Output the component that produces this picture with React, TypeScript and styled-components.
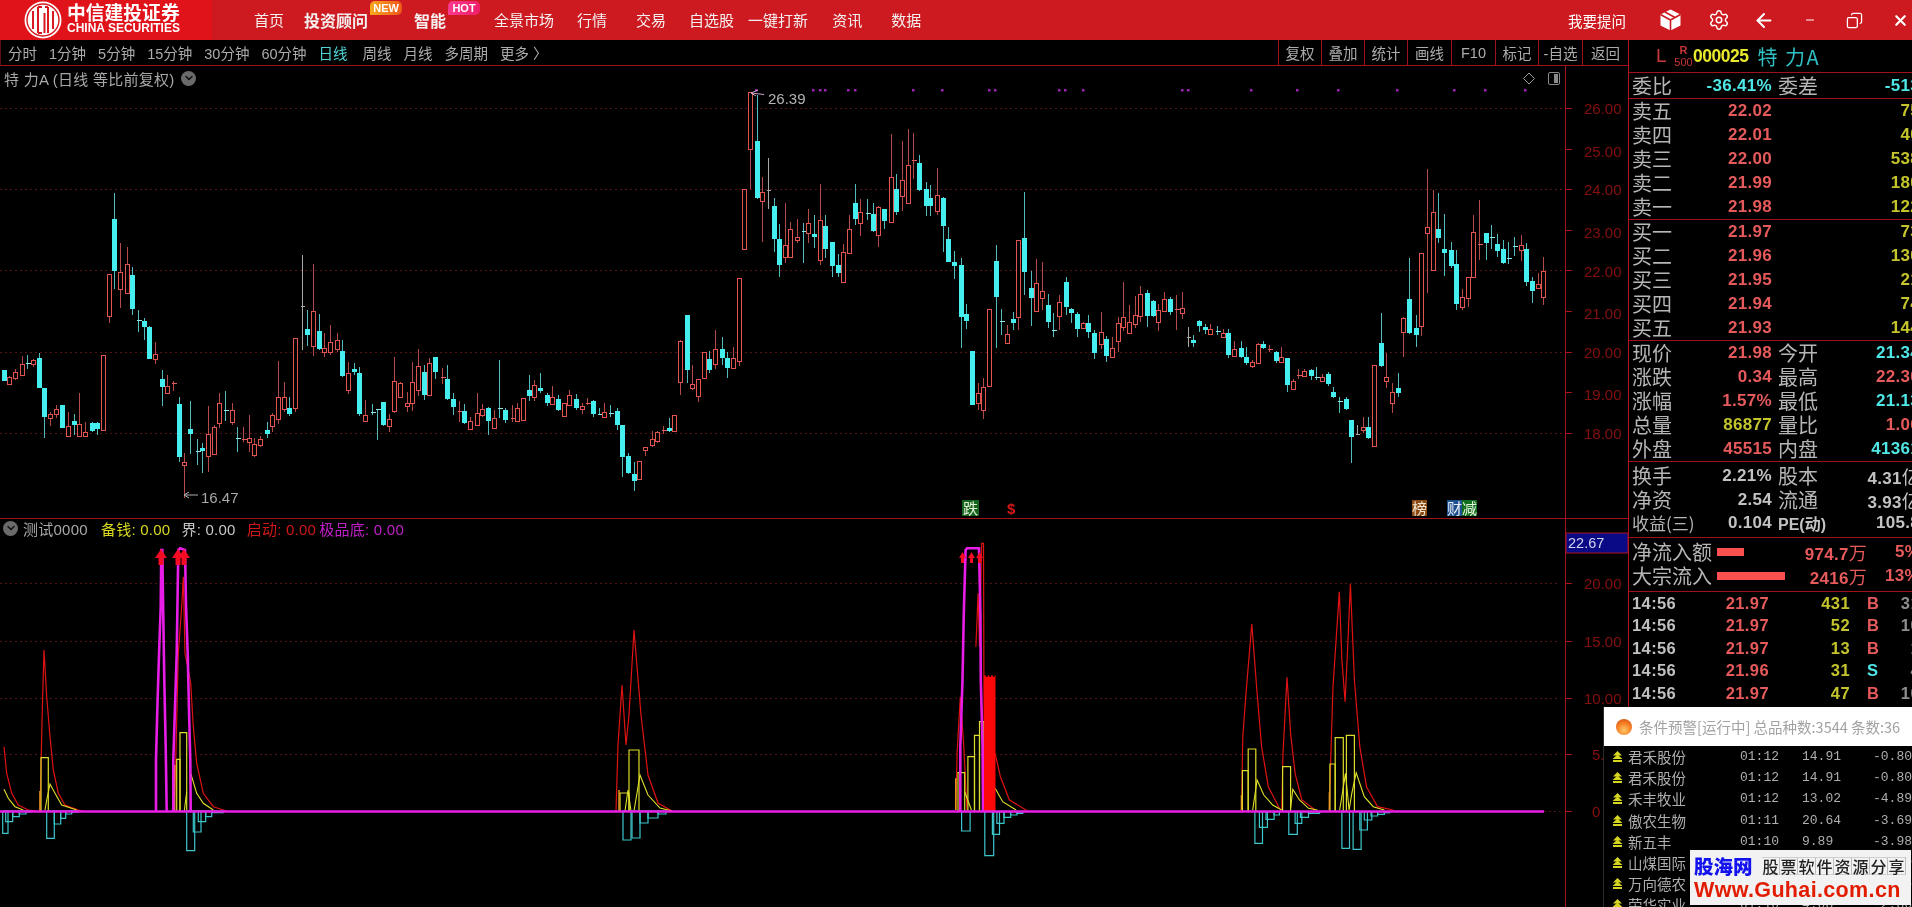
import React from "react";
import styled, { createGlobalStyle } from "styled-components";
import { Settings, ArrowLeft, Copy, X, Minus, ChevronDown } from "lucide-react";

const SANS = `"Liberation Sans", "Noto Sans CJK SC", sans-serif`;
const GlobalStyle = createGlobalStyle`
  html, body { margin: 0; padding: 0; background: #000; overflow: hidden; font-family: ${SANS}; }
`;

const RED_LINE = "#9e1218";
const C = { label: "#b6b6b6", red: "#e65a5c", cyan: "#4fe6e6", yellow: "#c4c42c", gray: "#c2c2c2" };

/* ---------- candle data: zoomed coordinates of each crop ---------- */
const SEG_A = `c12,600,600,633,633 r27,617,622,643,643 r45,597,607,623,630 r65,557,582,615,617 c80,555,578,580,598 r98,567,569,582,590 c117,548,563,653,655 c132,653,653,742,805 r151,727,733,745,767 r169,706,716,733,745 c185,706,706,775,775 r204,725,767,797,797 c222,733,753,765,795 r237,668,763,797,797 r256,755,785,799,802 c275,757,758,783,785 c290,757,758,777,795 r308,556,556,780,780 r327,313,313,437,460 c342,68,147,303,356 r361,218,307,358,415 r380,230,283,370,372 c395,292,316,416,434 c413,420,451,456,487 c432,444,454,472,510 c447,468,470,566,568 r466,515,552,567,582 c485,600,628,651,708 r500,615,647,670,672 r519,633,638,645,663 c538,680,702,862,875 r552,848,875,884,985 c571,693,777,791,852 c590,806,844,848,885 c605,818,833,843,910 r624,709,792,857,907 r642,765,772,851,855 r657,670,698,758,775 c676,664,720,722,753 r695,698,720,757,765 c710,772,803,805,845 r729,770,807,812,815 r747,735,803,816,845 r762,803,822,856,862 r781,798,806,825,830 c800,757,781,792,803 r815,730,734,767,785 r834,573,680,748,762 r852,635,680,717,727 c867,680,713,732,738 r885,503,503,713,727 g905,255,409,411,540 c920,420,477,495,528 r939,283,424,527,558 c958,432,484,538,540 r972,490,533,547,562 r991,465,515,547,555 r1010,488,511,537,545 c1025,510,544,618,622 r1044,575,608,660,672 c1062,578,597,606,615 c1077,590,608,733,738 r1096,690,736,752,755 c1115,702,725,728,736 c1130,716,716,718,810 c1149,695,697,765,767 r1167,732,748,767,787 r1183,562,634,724,728`;
const SEG_B = `r0,905,910,950,950 r20,935,968,977,997 r36,845,905,970,993 r54,806,858,930,947 c72,855,875,945,960 r87,833,848,945,945 c106,830,832,877,897 r125,865,890,892,912 c140,855,897,957,960 c158,938,957,982,1005 r177,962,992,1000,1025 c193,972,992,1030,1032 r211,1010,1024,1048,1050 r230,940,998,1034,1036 r245,972,988,1005,1010 c264,982,984,1024,1065 r282,990,1013,1045,1047 c297,840,985,988,1015 c316,985,990,1020,1030 r335,975,1013,1020,1025 r350,968,983,1022,1024 r369,955,955,1020,1020 c388,885,930,948,963 r403,900,915,952,963 c421,880,923,934,940 c440,940,945,968,978 r456,918,950,972,974 c474,945,958,990,992 r492,968,968,1008,1010 r508,930,945,975,975 c527,943,958,985,990 r545,968,977,987,1002 r560,955,968,974,974 c579,960,962,1002,1012 c597,985,1003,1005,1005 r612,968,997,1012,1014 c631,975,999,1003,1010 c650,985,994,1035,1050 c665,1036,1036,1130,1192 c684,1120,1128,1180,1182 c702,1145,1183,1203,1233 r717,1142,1144,1197,1200 r736,1100,1102,1110,1128 r755,1052,1078,1095,1102 r770,1052,1055,1083,1090 r789,1038,1050,1054,1062 c807,1015,1044,1054,1056 r822,1006,1006,1052,1054 r841,780,782,906,945 c860,705,706,870,910 r875,855,912,924,930 r894,898,898,947,967 r912,815,816,895,897 c927,812,838,870,880 r946,750,808,852,866 c965,772,808,833,855 c980,817,833,863,895 r999,802,833,865,867 r1017,594,594,842,858 r1032,328,328,508,510 r1051,35,35,208,328 c1070,45,183,355,357 r1085,290,335,363,487 g1103,233,330,332,388 c1122,353,377,478,517 c1137,432,478,555,590 r1156,368,495,532,548 r1171,425,447,530,533 r1190,418,470,480,490 c1209,428,452,460,548 r1224,388,430,460,490 c1242,405,463,472,503 r1261,312,420,540,554 c1276,405,438,508,535 c1295,485,485,558,592 c1314,522,556,580,590 r1329,492,515,605,607 r1347,405,447,520,522`;
const SEG_C = `c15,312,368,418,435 r31,357,397,430,467 c50,357,398,400,420 c69,368,402,452,456 r84,378,382,464,502 c103,388,388,423,446 r122,162,290,427,427 c137,283,327,395,405 r155,182,301,347,393 r174,147,256,370,372 r189,158,241,245,296 c208,225,248,330,332 c227,305,327,378,407 c241,316,353,378,407 r260,264,346,392,404 c279,352,353,437,517 c294,440,477,545,547 c313,512,545,558,596 c332,533,555,710,803 c347,672,702,722,746 c366,814,814,975,975 r384,908,938,968,990 r399,893,920,990,1016 r418,687,687,918,918 c437,495,544,652,805 c452,687,724,727,765 r471,735,762,788,788 c489,695,716,730,750 r504,481,481,711,750 c523,335,473,576,645 c542,574,624,655,738 r557,536,608,692,692 r576,547,634,655,690 c594,642,676,727,745 c609,698,750,753,772 r628,645,665,708,750 c647,592,606,680,705 c662,684,687,700,730 c681,695,701,746,772 r699,725,730,745,747 c714,705,729,757,775 c733,750,758,818,838 r752,697,756,792,808 c767,768,777,828,847 r786,770,803,832,834 r804,710,728,783,815 r819,606,710,742,752 r838,675,725,758,762 r856,648,706,733,745 r871,618,643,708,727 c890,630,640,708,742 c909,660,662,708,712 r924,672,690,726,752 r943,637,658,692,694 c961,650,656,695,705 r977,645,687,690,750 r995,637,684,699,718 g1014,740,770,772,800 c1029,765,781,788,802 c1048,720,722,737,757 c1066,732,740,750,762 r1081,733,748,762,766 c1100,737,753,760,765 r1119,748,759,772,775 c1134,748,758,825,835 r1153,782,808,827,830 c1172,782,803,832,835 c1187,800,830,850,855 r1205,840,845,857,865 r1224,790,792,850,852 c1239,782,792,803,806 r1258,795,806,812,815 c1277,812,815,842,850 r1292,802,830,846,848 c1311,833,833,915,935 r1329,897,904,928,930 r1344,868,884,890,897`;
const SEG_D = `r193,868,874,888,888 c212,868,869,888,900 c227,862,892,895,900 r246,882,890,902,903 c264,875,882,912,918 c279,920,936,950,955 c298,950,964,966,998 c317,950,958,988,990 c332,1020,1021,1072,1150 g351,1035,1062,1064,1066 r369,1012,1040,1050,1060 c384,1012,1040,1075,1078 r403,856,856,1098,1098 c422,698,788,858,860 r437,818,890,903,925 r456,908,935,968,998 c475,878,924,940,950 r489,712,714,757,832 c508,533,658,760,762 c527,705,744,765,800 r542,518,518,738,768 r561,267,440,460,640 r579,330,395,570,572 c594,338,448,475,488 c613,403,507,520,588 c632,485,510,558,565 c647,510,552,672,690 r666,628,650,682,690 r684,590,590,655,682 r699,405,455,592,592 r718,360,492,496,540 c737,458,459,490,540 c752,435,472,474,508 c771,462,492,513,532 c790,480,508,550,552 c804,485,535,537,552 c823,472,499,501,528 r842,465,496,510,542 c857,488,507,605,618 c876,592,604,632,668 r894,578,613,625,627 r909,530,572,652,675`;

type Candle = { k: string; x: number; hi: number; top: number; bot: number; lo: number };
const parseSeg = (s: string, ox: number, oy: number): Candle[] =>
  s.split(/\s+/).filter(Boolean).map((t) => {
    const [x, hi, top, bot, lo] = t.slice(1).split(",").map(Number);
    const y = (v: number) => Math.round(oy + v / 3);
    return { k: t[0], x: Math.round(ox + x / 3), hi: y(hi), top: y(top), bot: y(bot), lo: y(lo) };
  });
const CANDLES: Candle[] = [
  ...parseSeg(SEG_A, 0, 170),
  ...parseSeg(SEG_B, 400, 80),
  ...parseSeg(SEG_C, 850, 80),
  ...parseSeg(SEG_D, 1240, 80),
];

const CandleMark = ({ c }: { c: Candle }) => {
  const cx = c.x + 0.5;
  const thin = c.bot - c.top < 3;
  if (c.k === "g")
    return (
      <g stroke="#a8a8a8">
        <line x1={cx} x2={cx} y1={c.hi} y2={c.lo} />
        <line x1={cx - 2} x2={cx + 2} y1={c.top} y2={c.top} />
      </g>
    );
  if (c.k === "c")
    return (
      <g>
        <line x1={cx} x2={cx} y1={c.hi} y2={c.lo} stroke="#52bcbc" />
        {thin ? (
          <line x1={cx - 2} x2={cx + 3} y1={c.top + 0.5} y2={c.top + 0.5} stroke="#8eeaea" />
        ) : (
          <rect x={c.x - 2} y={c.top} width={5} height={c.bot - c.top} fill="#46efef" />
        )}
      </g>
    );
  return (
    <g>
      <line x1={cx} x2={cx} y1={c.hi} y2={c.lo} stroke="#b44a4a" />
      {thin ? (
        <line x1={cx - 2} x2={cx + 3} y1={c.top + 0.5} y2={c.top + 0.5} stroke="#e45c5c" />
      ) : (
        <rect x={c.x - 1.5} y={c.top + 0.5} width={4} height={c.bot - c.top} fill="#000" stroke="#e2544f" />
      )}
    </g>
  );
};

/* ---------- indicator data ---------- */
type Bar = [number, number, number];
type Group = {
  sx: number; ox: number; oy: number; sy: number; base: number;
  red: string[]; yellow: string[]; orange: string[]; magenta: string[];
  cyanBars: Bar[]; yellowBars: Bar[];
};
const INDICATOR: Group[] = [
  {
    sx: 1 / 3, ox: 0, oy: 510, sy: 1 / 3, base: 903,
    red: [
      "12,710 20,790 35,850 55,885 85,900 110,903",
      "120,903 124,730 127,600 132,420 140,560 150,680 160,780 175,850 195,885 235,900 250,903",
      "522,903 527,760 535,430 545,290 550,200 555,430 565,480 572,520 580,650 590,760 610,850 640,890 680,903",
    ],
    yellow: [
      "12,838 25,865 45,890 70,900",
      "135,900 140,870 150,822 165,850 185,885 230,900",
      "553,903 560,845",
      "572,790 590,850 610,880 640,900",
    ],
    orange: ["120,903 120,843", "524,903 524,765"],
    magenta: [
      "468,903 468,750 472,600 477,435 482,290 484,120 487,120 490,320 493,510 497,710 500,903",
      "520,903 520,750 525,590 530,430 535,120 540,115 555,120 558,285 563,430 567,600 571,750 572,903",
    ],
    cyanBars: [
      [8, 24, 970], [17, 38, 935], [38, 58, 920], [58, 78, 912], [78, 92, 906],
      [140, 163, 985], [163, 182, 942], [182, 197, 925], [197, 215, 912], [215, 235, 906],
      [560, 584, 1022], [580, 603, 966], [595, 617, 935], [617, 635, 920], [635, 670, 908],
    ],
    yellowBars: [[123, 145, 743], [530, 540, 748], [540, 560, 668]],
  },
  {
    sx: 1, ox: 0, oy: 0, sy: 1, base: 811,
    red: ["616,811 618,745 622,685 626,745 629,715 634,630 641,715 648,775 658,803 672,811"],
    yellow: ["634,811 640,775 648,795 660,808 672,811", "625,811 628,790 631,811"],
    orange: ["619,811 619,790"],
    magenta: [],
    cyanBars: [[623, 631, 840], [632, 640, 838], [640, 648, 823], [648, 658, 818], [658, 666, 814]],
    yellowBars: [[620, 629, 793], [629, 639, 750]],
  },
  {
    sx: 0.4464, ox: 900, oy: 480, sy: 1 / 3, base: 995,
    red: [
      "125,990 128,820 135,650 143,800 150,990",
      "170,500 175,340 178,500 183,190 187,190 188,600 190,995",
      "213,820 225,890 245,960 285,992",
      "765,990 768,770 775,640 788,432 800,640 810,800 825,920 850,985",
      "855,990 858,820 867,592 875,760 885,880 900,960 930,990",
      "962,990 965,830 970,620 984,335 990,540 997,665 1003,500 1009,312 1018,600 1030,800 1045,920 1070,980 1105,990",
    ],
    yellow: [
      "145,935 160,990",
      "213,925 230,965 260,990",
      "790,990 800,900 815,945 835,975 855,990",
      "875,985 880,928 895,960 915,985 935,990",
      "985,990 998,880 1006,990 1012,940 1022,878 1040,950 1060,980 1085,990",
    ],
    orange: ["125,990 125,895", "765,990 765,945", "962,990 962,937"],
    magenta: ["135,995 135,800 140,600 143,400 147,210 150,205 177,205 180,400 181,600 185,800 186,995"],
    cyanBars: [
      [138, 157, 1053], [190, 210, 1127], [207, 223, 1063], [217, 233, 1030], [233, 248, 1012], [248, 262, 1005], [262, 275, 1000],
      [795, 812, 1090], [805, 823, 1042], [820, 838, 1018], [838, 850, 1005],
      [871, 890, 1063], [885, 900, 1030], [897, 915, 1012], [915, 940, 1000],
      [990, 1007, 1105], [1015, 1033, 1108], [1030, 1047, 1050], [1040, 1057, 1020], [1055, 1070, 1008], [1070, 1085, 1003], [1085, 1097, 998],
    ],
    yellowBars: [
      [130, 145, 878], [152, 167, 830], [167, 178, 766], [178, 188, 725],
      [767, 780, 872], [780, 797, 807], [857, 875, 860], [963, 975, 852], [975, 993, 773], [1000, 1018, 766],
    ],
  },
];

const ptsOf = (g: Group, s: string) =>
  s.split(" ").map((p) => {
    const [x, y] = p.split(",").map(Number);
    return `${(g.ox + x * g.sx).toFixed(1)},${(g.oy + y * g.sy).toFixed(1)}`;
  }).join(" ");
const gx = (g: Group, v: number) => g.ox + v * g.sx;
const gy = (g: Group, v: number) => g.oy + v * g.sy;
const barPath = (g: Group, b: Bar) => {
  const [x1, x2, y] = b;
  const base = gy(g, g.base);
  return `M${gx(g, x1).toFixed(1)} ${base}V${gy(g, y).toFixed(1)}H${gx(g, x2).toFixed(1)}V${base}`;
};

/* ---------- layout ---------- */
const Page = styled.div`
  position: relative;
  width: 1912px;
  height: 907px;
  overflow: hidden;
  background: #000;
  display: flex;
  flex-direction: column;
  filter: blur(0.3px);
`;
const TopBar = styled.header`
  height: 40px;
  flex: none;
  display: flex;
  align-items: center;
  background: #cc1a20;
  color: #f4f0f0;
`;
const LogoBlock = styled.div`
  width: 212px;
  height: 40px;
  flex: none;
  display: flex;
  align-items: center;
  padding-left: 24px;
  box-sizing: border-box;
  gap: 5px;
  background: #e0121a;
  color: #fff;
`;
const LogoText = styled.div`
  display: flex;
  flex-direction: column;
  line-height: 1;
  margin-top: -3px;
`;
const LogoCn = styled.span`
  font: 700 18.8px "Noto Sans CJK SC", sans-serif;
  line-height: 20px;
  white-space: nowrap;
`;
const LogoEn = styled.span`
  font: 700 12px "Liberation Sans", sans-serif;
  line-height: 13px;
  white-space: nowrap;
`;
const Nav = styled.nav`
  display: flex;
  align-items: center;
  padding-left: 42px;
`;
const NavItem = styled.span<{ $ml?: number; $bold?: boolean }>`
  position: relative;
  margin-left: ${(p) => p.$ml ?? 0}px;
  font-size: ${(p) => (p.$bold ? 16 : 15)}px;
  font-weight: ${(p) => (p.$bold ? 700 : 400)};
  font-family: "Noto Sans CJK SC", sans-serif;
  line-height: 22px;
  white-space: nowrap;
`;
const Badge = styled.span<{ $bg: string }>`
  position: absolute;
  left: calc(100% + 2px);
  top: -8px;
  width: 32px;
  height: 14px;
  border-radius: 5px 5px 5px 0;
  background: ${(p) => p.$bg};
  color: #fff;
  font: 700 11px/14px "Liberation Sans", sans-serif;
  text-align: center;
`;
const TopRight = styled.div`
  margin-left: auto;
  display: flex;
  align-items: center;
  color: #fff;
  height: 40px;
`;
const Ask = styled.span`
  font: 400 14.5px "Noto Sans CJK SC", sans-serif;
  margin-right: 29px;
  white-space: nowrap;
`;
const WinIcon = styled.span<{ $w: number; $pl?: number }>`
  width: ${(p) => p.$w}px;
  padding-left: ${(p) => p.$pl ?? 0}px;
  box-sizing: border-box;
  display: flex;
  justify-content: center;
  align-items: center;
`;
const Body = styled.div`
  flex: 1;
  display: flex;
  min-height: 0;
`;
const MainCol = styled.main`
  width: 1628px;
  flex: none;
  display: flex;
  flex-direction: column;
`;
const Toolbar = styled.div`
  height: 25px;
  flex: none;
  display: flex;
  align-items: center;
  padding-left: 7px;
  gap: 12px;
  border-bottom: 1px solid ${RED_LINE};
  border-left: 1px solid #5a1014;
  box-sizing: content-box;
  font-size: 14.5px;
  color: #acacac;
`;
const Period = styled.span<{ $active?: boolean; $ml?: number }>`
  color: ${(p) => (p.$active ? "#4fd4d8" : "#acacac")};
  margin-left: ${(p) => p.$ml ?? 0}px;
  white-space: nowrap;
`;
const ToolButtons = styled.div`
  margin-left: auto;
  display: flex;
  height: 100%;
`;
const ToolButton = styled.span<{ $w?: number }>`
  width: ${(p) => p.$w ?? 43}px;
  box-sizing: border-box;
  border-left: 1px solid ${RED_LINE};
  display: flex;
  align-items: center;
  justify-content: center;
  white-space: nowrap;
  color: #acacac;
`;
const Pane = styled.section<{ $h: number; $line?: boolean }>`
  position: relative;
  height: ${(p) => p.$h}px;
  flex: none;
  ${(p) => (p.$line ? `border-bottom: 1px solid ${RED_LINE};` : "")}
`;
const Chart = styled.svg`
  display: block;
  width: 1628px;
  height: 100%;
  text {
    font-family: ${SANS};
  }
`;
const PaneHeader = styled.div<{ $left?: number; $top?: number }>`
  position: absolute;
  left: ${(p) => p.$left ?? 4}px;
  top: ${(p) => p.$top ?? 2}px;
  display: flex;
  align-items: center;
  height: 20px;
  font-size: 15px;
  letter-spacing: 0.25px;
  color: #a8a8a8;
  white-space: nowrap;
`;
const Legend = styled.span<{ $c: string; $ml?: number }>`
  color: ${(p) => p.$c};
  margin-left: ${(p) => p.$ml ?? 0}px;
`;
const RoundDrop = styled.span<{ $ml?: number; $mr?: number }>`
  width: 15px;
  height: 15px;
  border-radius: 50%;
  background: #6a6a6a;
  color: #111;
  margin-left: ${(p) => p.$ml ?? 0}px;
  margin-right: ${(p) => p.$mr ?? 0}px;
  display: inline-flex;
  align-items: center;
  justify-content: center;
  flex: none;
`;

/* right panel */
const Panel = styled.aside`
  flex: 1;
  min-width: 0;
  overflow: hidden;
  border-left: 1px solid #b0141c;
  box-sizing: border-box;
`;
const QuoteHead = styled.div`
  height: 32px;
  display: flex;
  align-items: center;
  padding-left: 27px;
  white-space: nowrap;
`;
const HeadL = styled.span`
  font-size: 19px;
  color: #c8383a;
  width: 18px;
`;
const HeadRStack = styled.span`
  display: inline-flex;
  flex-direction: column;
  align-items: center;
  width: 19px;
  font-size: 11px;
  line-height: 12px;
  color: #c83434;
`;
const HeadCode = styled.span`
  font: 700 17.5px "Liberation Sans", sans-serif;
  color: #e8e82c;
  margin-left: 0;
  letter-spacing: -0.5px;
`;
const HeadName = styled.span`
  font: 400 20px "Noto Sans CJK SC", sans-serif;
  color: #2fc0c4;
  margin-left: 9px;
  letter-spacing: 1.5px;
`;
const QuoteGroup = styled.div<{ $pt?: number; $pb?: number }>`
  border-top: 1px solid ${RED_LINE};
  padding-top: ${(p) => p.$pt ?? 0}px;
  padding-bottom: ${(p) => p.$pb ?? 0}px;
  width: 291px;
  box-sizing: border-box;
  padding-left: 3px;
`;
const QuoteRow = styled.div<{ $h?: number }>`
  display: grid;
  grid-template-columns: 44px 96px 50px 98px;
  height: ${(p) => p.$h ?? 24}px;
  align-items: center;
`;
const QLabel = styled.span`
  font: 400 20px "Noto Sans CJK SC", sans-serif;
  line-height: 24px;
  color: ${C.label};
  white-space: nowrap;
`;
const QLabel2 = styled(QLabel)`
  padding-left: 6px;
`;
const QLabelSmall = styled(QLabel)`
  font-size: 17px;
`;
const QLabelBold = styled(QLabel2)`
  font: 700 16px "Liberation Sans", "Noto Sans CJK SC", sans-serif;
  color: #c2c2c2;
`;
const QVal = styled.span<{ $c: string }>`
  font: 700 17px "Liberation Sans", sans-serif;
  letter-spacing: 0.3px;
  color: ${(p) => p.$c};
  text-align: right;
  white-space: nowrap;
`;
const QPercent = styled(QVal)<{ $pl?: number }>`
  padding-left: ${(p) => p.$pl ?? 0}px;
  text-align: ${(p) => (p.$pl ? "left" : "right")};
`;
const Unit = styled.span`
  font: 400 18px "Noto Sans CJK SC", sans-serif;
`;
const FlowRow = styled.div`
  display: grid;
  grid-template-columns: 85px 70px 80px 53px;
  height: 24px;
  align-items: center;
`;
const FlowBar = styled.span<{ $w: number }>`
  display: block;
  height: 8px;
  width: ${(p) => p.$w}px;
  background: #fb5050;
`;
const TickRow = styled.div`
  display: grid;
  grid-template-columns: 60px 77px 81px 17px 11px 42px;
  height: 22.5px;
  align-items: center;
`;
const TickCell = styled.span<{ $c: string; $right?: boolean }>`
  font: 700 16.5px "Liberation Sans", sans-serif;
  letter-spacing: 0.4px;
  color: ${(p) => p.$c};
  text-align: ${(p) => (p.$right ? "right" : "left")};
  white-space: nowrap;
`;

/* popup */
const Popup = styled.div`
  position: absolute;
  left: 1603px;
  top: 707px;
  width: 309px;
  height: 200px;
  background: #000;
  overflow: hidden;
  border-left: 1px solid #2a2a2a;
  box-sizing: border-box;
`;
const PopupTitle = styled.div`
  height: 39px;
  background: #fff;
  display: flex;
  align-items: center;
  padding-left: 12px;
  gap: 7px;
  font: 400 14.5px "Noto Sans CJK SC", sans-serif;
  color: #a2a2a2;
  white-space: nowrap;
`;
const Ball = styled.span`
  width: 16px;
  height: 16px;
  border-radius: 50%;
  flex: none;
  background: radial-gradient(circle at 50% 70%, #ffc866 0, #f57a20 55%, #c84a14 100%);
`;
const AlertRow = styled.div`
  display: grid;
  grid-template-columns: 24px 112px 62px 71px 40px;
  height: 21.2px;
  align-items: center;
  color: #aeaeae;
  white-space: nowrap;
`;
const AlertIcon = styled.span`
  display: flex;
  justify-content: center;
  padding-left: 3px;
`;
const AlertName = styled.span`
  font: 400 14.5px "Noto Sans CJK SC", sans-serif;
`;
const AlertNum = styled.span`
  font: 400 13px "Liberation Mono", monospace;
`;
const Watermark = styled.div`
  position: absolute;
  left: 86px;
  top: 143px;
  width: 221px;
  height: 55px;
  background: #f2f2f2;
  display: flex;
  flex-direction: column;
  padding: 4px 3px 0 4px;
  box-sizing: border-box;
`;
const WmTop = styled.div`
  display: flex;
  align-items: center;
  height: 24px;
`;
const WmBrand = styled.span`
  font: 900 19.5px/24px "Noto Sans CJK SC", sans-serif;
  color: #1212ee;
  width: 68px;
  white-space: nowrap;
`;
const WmChar = styled.span`
  width: 18px;
  height: 18px;
  display: inline-flex;
  align-items: center;
  justify-content: center;
  font: 500 16px "Noto Sans CJK SC", sans-serif;
  color: #222;
  border-right: 1px solid #bdbdbd;
  border-top: 1px solid #d0d0d0;
  border-bottom: 1px solid #d0d0d0;
  box-sizing: border-box;
`;
const WmUrl = styled.div`
  font: 700 21.5px/24px "Liberation Sans", sans-serif;
  color: #e21c00;
  letter-spacing: 0.35px;
  white-space: nowrap;
`;

/* ---------- small drawings ---------- */
const CiticLogo = () => (
  <svg width="38" height="38" viewBox="0 0 38 38">
    <circle cx="19" cy="19" r="18.5" fill="#fff" />
    <circle cx="19" cy="19" r="16" fill="none" stroke="#d81820" strokeWidth="1.4" />
    <g fill="none" stroke="#d81820" strokeWidth="2">
      <path d="M9 10v18" />
      <path d="M14 6v26M14 6h4M14 32h4" />
      <path d="M20.5 12v20M24 6v26M24 6h-3" />
      <path d="M29 10v18" />
    </g>
  </svg>
);
const Cube = () => (
  <svg width="21" height="22" viewBox="0 0 21 22">
    <path d="M10.5 0.5 20.5 5.5v11l-10 5-10-5v-11z" fill="#fff" />
    <path d="M0.5 5.5l10 5.5 10-5.5M10.5 11v11M5 3l10 5.5" fill="none" stroke="#cc1a20" strokeWidth="1.6" />
  </svg>
);
const DoubleUp = () => (
  <svg width="11" height="11" viewBox="0 0 11 11" fill="#d6d620">
    <path d="M5.5 0 10 4.5H1z" />
    <path d="M5.5 3.5 10.5 8H.5z" />
    <rect x="1" y="9" width="9" height="2" />
  </svg>
);

/* ---------- data for panel ---------- */
const SELL = [["卖五", "22.02", "75"], ["卖四", "22.01", "40"], ["卖三", "22.00", "538"], ["卖二", "21.99", "180"], ["卖一", "21.98", "122"]];
const BUY = [["买一", "21.97", "73"], ["买二", "21.96", "130"], ["买三", "21.95", "21"], ["买四", "21.94", "74"], ["买五", "21.93", "144"]];
const TICKS = [
  ["21.97", "431", "B", "31"], ["21.97", "52", "B", "10"], ["21.97", "13", "B", "1"], ["21.96", "31", "S", "4"], ["21.97", "47", "B", "10"],
];
const ALERTS = [
  ["君禾股份", "01:12", "14.91", "-0.80%"], ["君禾股份", "01:12", "14.91", "-0.80%"], ["禾丰牧业", "01:12", "13.02", "-4.89%"],
  ["傲农生物", "01:11", "20.64", "-3.69%"], ["新五丰", "01:10", "9.89", "-3.98%"], ["山煤国际", "01:10", "7.85", "-1.20%"],
  ["万向德农", "01:10", "12.36", "-2.15%"], ["荣华实业", "01:10", "4.08", "-2.86%"],
];
const DOTS = [756, 813, 820, 825, 848, 855, 913, 942, 989, 995, 1059, 1065, 1083, 1182, 1188, 1251, 1297, 1338, 1397, 1454, 1485, 1525];
const UPPER_LABELS: [string, number][] = [["26.00", 108], ["25.00", 151], ["24.00", 189], ["23.00", 232], ["22.00", 271], ["21.00", 313], ["20.00", 352], ["19.00", 394], ["18.00", 433]];
const UPPER_TICKS = [108, 149, 189, 230, 270, 311, 352, 392, 433];
const UPPER_GRID = [108, 189, 270, 352, 433];
const LOWER_GRID = [583, 641, 698, 754];

const AXIS = "#a8141c";
const GRID = "#541414";
const AXIS_TEXT = "#86100f";

const UpperChart = () => (
  <Chart viewBox="0 66 1628 452" preserveAspectRatio="none">
    {UPPER_GRID.map((y) => (
      <line key={y} x1="0" x2="1565" y1={y + 0.5} y2={y + 0.5} stroke={GRID} strokeDasharray="2 3" />
    ))}
    {UPPER_TICKS.map((y) => (
      <line key={y} x1="1566" x2="1572" y1={y + 0.5} y2={y + 0.5} stroke={AXIS} />
    ))}
    <line x1="1565.5" x2="1565.5" y1="66" y2="518" stroke={AXIS} />
    {UPPER_LABELS.map(([t, y]) => (
      <text key={t} x="1584" y={y + 5.5} fontSize="15" fill={AXIS_TEXT}>{t}</text>
    ))}
    {DOTS.map((x) => (
      <rect key={x} x={x - 1} y="89" width="2.5" height="2.5" fill="#a022b4" />
    ))}
    <g shapeRendering="crispEdges">
      {CANDLES.map((c, i) => <CandleMark key={i} c={c} />)}
    </g>
    {/* extremes */}
    <path d="M751 93l7-3M751 93l5 3M751 93l13 1.500" fill="none" stroke="#c9a8c9" />
    <text x="768" y="104" fontSize="15" fill="#b4b4b4">26.39</text>
    <path d="M184 495h14M184 495l5-3M184 495l5 3" fill="none" stroke="#b0b0b0" />
    <text x="201" y="502.500" fontSize="15" fill="#a8a8a8">16.47</text>
    {/* signals */}
    <rect x="962" y="500" width="17" height="16" fill="#16651e" />
    <text x="963" y="514" fontSize="15" fill="#e6f0d8">跌</text>
    <text x="1007" y="514" fontSize="15" fontWeight="700" fill="#d81818">$</text>
    <rect x="1412" y="500" width="15" height="16" fill="#8a4a14" />
    <text x="1412" y="514" fontSize="15" fill="#f0e4d0">榜</text>
    <rect x="1447" y="500" width="15" height="16" fill="#1e4f8e" />
    <text x="1447" y="514" fontSize="15" fill="#e8eef8">财</text>
    <rect x="1462" y="500" width="15" height="16" fill="#12701c" />
    <text x="1462" y="514" fontSize="15" fill="#e8f4e0">减</text>
    {/* corner icons */}
    <path d="M1529 73l5.500 5.500-5.500 5.500-5.500-5.500z" fill="none" stroke="#9a9a9a" />
    <rect x="1548.500" y="72.500" width="11" height="12" rx="1.500" fill="none" stroke="#8a8a8a" />
    <rect x="1554" y="74" width="4" height="9" fill="#8a8a8a" />
  </Chart>
);

const LowerChart = () => (
  <Chart viewBox="0 519 1628 388" preserveAspectRatio="none">
    {LOWER_GRID.map((y) => (
      <line key={y} x1="0" x2="1560" y1={y + 0.5} y2={y + 0.5} stroke={GRID} strokeDasharray="2 3" />
    ))}
    <line x1="1544" x2="1560" y1="811.500" y2="811.500" stroke={GRID} strokeDasharray="2 3" />
    {[...LOWER_GRID, 811].map((y) => (
      <line key={y} x1="1566" x2="1572" y1={y + 0.5} y2={y + 0.5} stroke={AXIS} />
    ))}
    <line x1="1565.500" x2="1565.500" y1="519" y2="907" stroke={AXIS} />
    <rect x="1566" y="533" width="62" height="20" fill="#0a0a86" stroke={AXIS} />
    <text x="1568" y="548" fontSize="14.500" fill="#d4d4f0">22.67</text>
    <text x="1584" y="588.500" fontSize="15" fill={AXIS_TEXT}>20.00</text>
    <text x="1584" y="646.500" fontSize="15" fill={AXIS_TEXT}>15.00</text>
    <text x="1584" y="703.500" fontSize="15" fill={AXIS_TEXT}>10.00</text>
    <text x="1592" y="759.500" fontSize="15" fill={AXIS_TEXT}>5.00</text>
    <text x="1592" y="817" fontSize="15" fill={AXIS_TEXT}>0</text>

    {INDICATOR.map((g, gi) => (
      <g key={gi} fill="none">
        {g.red.map((s, i) => <polyline key={i} points={ptsOf(g, s)} stroke="#e01212" strokeWidth="1.200" />)}
        {g.yellowBars.map((b, i) => <path key={i} d={barPath(g, b)} stroke="#dcdc2c" strokeWidth="1.200" />)}
        {g.yellow.map((s, i) => <polyline key={i} points={ptsOf(g, s)} stroke="#e2e22a" strokeWidth="1.100" />)}
        {g.orange.map((s, i) => <polyline key={i} points={ptsOf(g, s)} stroke="#e89a20" strokeWidth="1.500" />)}
        {g.cyanBars.map((b, i) => <path key={i} d={barPath(g, b) + "Z"} stroke="#3cc6cc" strokeWidth="1.200" />)}
        {g.magenta.map((s, i) => <polyline key={i} points={ptsOf(g, s)} stroke="#e81ee8" strokeWidth="2.600" />)}
      </g>
    ))}
    <rect x="984" y="677" width="11.500" height="135" fill="#fc0808" />
    <path d="M984 677v-1.500h2v1.500h1.500v-1.500h2v1.500h1.500v-1.500h2v1.500h1.500v-1.500h1v1.500z" fill="#fc0808" />
    <line x1="0" x2="1544" y1="811.500" y2="811.500" stroke="#e81ee8" strokeWidth="2.500" />
    <g fill="#f40c24">
      {[161, 178, 184].map((x) => (
        <path key={x} d={`M${x} 549l6 9h-3.500v7h-5v-7h-3.500z`} />
      ))}
      {[962.500, 971.500, 979.500].map((x) => (
        <path key={x} d={`M${x} 552l3.500 6h-2v5h-3v-5h-2z`} />
      ))}
    </g>
  </Chart>
);

export default function App() {
  return (
    <Page>
      <GlobalStyle />
      <TopBar>
        <LogoBlock>
          <CiticLogo />
          <LogoText>
            <LogoCn>中信建投证券</LogoCn>
            <LogoEn>CHINA SECURITIES</LogoEn>
          </LogoText>
        </LogoBlock>
        <Nav>
          <NavItem>首页</NavItem>
          <NavItem $ml={20} $bold>投资顾问<Badge $bg="linear-gradient(90deg,#f9a81c,#f0581c)">NEW</Badge></NavItem>
          <NavItem $ml={46} $bold>智能<Badge $bg="linear-gradient(90deg,#fb3a8e,#ee1e6a)">HOT</Badge></NavItem>
          <NavItem $ml={48}>全景市场</NavItem>
          <NavItem $ml={23}>行情</NavItem>
          <NavItem $ml={29}>交易</NavItem>
          <NavItem $ml={23}>自选股</NavItem>
          <NavItem $ml={14}>一键打新</NavItem>
          <NavItem $ml={24}>资讯</NavItem>
          <NavItem $ml={29}>数据</NavItem>
        </Nav>
        <TopRight>
          <Ask>我要提问</Ask>
          <WinIcon $w={30}><Cube /></WinIcon>
          <WinIcon $w={68}><Settings size={22} strokeWidth={1.6} /></WinIcon>
          <WinIcon $w={22}><ArrowLeft size={23} strokeWidth={2.2} /></WinIcon>
          <WinIcon $w={70}><Minus size={12} strokeWidth={2} /></WinIcon>
          <WinIcon $w={18}><Copy size={17} strokeWidth={1.8} style={{ transform: "scaleX(-1)" }} /></WinIcon>
          <WinIcon $w={49} $pl={25}><X size={17} strokeWidth={3} /></WinIcon>
        </TopRight>
      </TopBar>
      <Body>
        <MainCol>
          <Toolbar>
            <Period>分时</Period>
            <Period>1分钟</Period>
            <Period>5分钟</Period>
            <Period>15分钟</Period>
            <Period>30分钟</Period>
            <Period>60分钟</Period>
            <Period $active>日线</Period>
            <Period $ml={3}>周线</Period>
            <Period>月线</Period>
            <Period>多周期</Period>
            <Period>更多 〉</Period>
            <ToolButtons>
              <ToolButton>复权</ToolButton>
              <ToolButton>叠加</ToolButton>
              <ToolButton>统计</ToolButton>
              <ToolButton $w={44}>画线</ToolButton>
              <ToolButton $w={44}>F10</ToolButton>
              <ToolButton>标记</ToolButton>
              <ToolButton $w={44}>-自选</ToolButton>
              <ToolButton $w={46}>返回</ToolButton>
            </ToolButtons>
          </Toolbar>
          <Pane $h={452} $line>
            <UpperChart />
            <PaneHeader>
              特 力A (日线 等比前复权)
              <RoundDrop $ml={7}><ChevronDown size={12} strokeWidth={3} /></RoundDrop>
            </PaneHeader>
          </Pane>
          <Pane $h={388}>
            <LowerChart />
            <PaneHeader $left={3} $top={-1}>
              <RoundDrop $mr={5}><ChevronDown size={12} strokeWidth={3} /></RoundDrop>
              测试0000
              <Legend $c="#d8d820" $ml={13}>备钱: 0.00</Legend>
              <Legend $c="#c8c8c8" $ml={11}>界: 0.00</Legend>
              <Legend $c="#d01818" $ml={11}>启动: 0.00</Legend>
              <Legend $c="#c020c8" $ml={3}>极品底: 0.00</Legend>
            </PaneHeader>
          </Pane>
        </MainCol>
        <Panel>
          <QuoteHead>
            <HeadL>L</HeadL>
            <HeadRStack><b>R</b>500</HeadRStack>
            <HeadCode>000025</HeadCode>
            <HeadName>特 力A</HeadName>
          </QuoteHead>
          <QuoteGroup>
            <QuoteRow $h={25}>
              <QLabel>委比</QLabel><QVal $c={C.cyan}>-36.41%</QVal>
              <QLabel2>委差</QLabel2><QVal $c={C.cyan}>-513</QVal>
            </QuoteRow>
          </QuoteGroup>
          <QuoteGroup>
            {SELL.map(([l, p, v]) => (
              <QuoteRow key={l}>
                <QLabel>{l}</QLabel><QVal $c={C.red}>{p}</QVal><span /><QVal $c={C.yellow}>{v}</QVal>
              </QuoteRow>
            ))}
          </QuoteGroup>
          <QuoteGroup>
            {BUY.map(([l, p, v]) => (
              <QuoteRow key={l}>
                <QLabel>{l}</QLabel><QVal $c={C.red}>{p}</QVal><span /><QVal $c={C.yellow}>{v}</QVal>
              </QuoteRow>
            ))}
          </QuoteGroup>
          <QuoteGroup>
            <QuoteRow><QLabel>现价</QLabel><QVal $c={C.red}>21.98</QVal><QLabel2>今开</QLabel2><QVal $c={C.cyan}>21.34</QVal></QuoteRow>
            <QuoteRow><QLabel>涨跌</QLabel><QVal $c={C.red}>0.34</QVal><QLabel2>最高</QLabel2><QVal $c={C.red}>22.30</QVal></QuoteRow>
            <QuoteRow><QLabel>涨幅</QLabel><QVal $c={C.red}>1.57%</QVal><QLabel2>最低</QLabel2><QVal $c={C.cyan}>21.13</QVal></QuoteRow>
            <QuoteRow><QLabel>总量</QLabel><QVal $c={C.yellow}>86877</QVal><QLabel2>量比</QLabel2><QVal $c={C.red}>1.06</QVal></QuoteRow>
            <QuoteRow><QLabel>外盘</QLabel><QVal $c={C.red}>45515</QVal><QLabel2>内盘</QLabel2><QVal $c={C.cyan}>41361</QVal></QuoteRow>
          </QuoteGroup>
          <QuoteGroup $pt={1} $pb={2}>
            <QuoteRow><QLabel>换手</QLabel><QVal $c={C.gray}>2.21%</QVal><QLabel2>股本</QLabel2><QVal $c={C.gray}>4.31<Unit>亿</Unit></QVal></QuoteRow>
            <QuoteRow><QLabel>净资</QLabel><QVal $c={C.gray}>2.54</QVal><QLabel2>流通</QLabel2><QVal $c={C.gray}>3.93<Unit>亿</Unit></QVal></QuoteRow>
            <QuoteRow><QLabelSmall>收益(三)</QLabelSmall><QVal $c={C.gray}>0.104</QVal><QLabelBold>PE(动)</QLabelBold><QVal $c={C.gray}>105.8</QVal></QuoteRow>
          </QuoteGroup>
          <QuoteGroup $pt={1} $pb={4}>
            <FlowRow>
              <QLabel>净流入额</QLabel><FlowBar $w={27} /><QVal $c={C.red}>974.7<Unit>万</Unit></QVal><QPercent $c={C.red} $pl={28}>5%</QPercent>
            </FlowRow>
            <FlowRow>
              <QLabel>大宗流入</QLabel><FlowBar $w={68} /><QVal $c={C.red}>2416<Unit>万</Unit></QVal><QPercent $c={C.red}>13%</QPercent>
            </FlowRow>
          </QuoteGroup>
          <QuoteGroup>
            {TICKS.map(([p, v, s, n], i) => (
              <TickRow key={i}>
                <TickCell $c="#c0c0c0">14:56</TickCell>
                <TickCell $c={C.red} $right>{p}</TickCell>
                <TickCell $c={C.yellow} $right>{v}</TickCell>
                <span />
                <TickCell $c={s === "B" ? C.red : C.cyan}>{s}</TickCell>
                <TickCell $c="#8e8e8e" $right>{n}</TickCell>
              </TickRow>
            ))}
          </QuoteGroup>
        </Panel>
      </Body>
      <Popup>
        <PopupTitle>
          <Ball />
          条件预警[运行中] 总品种数:3544 条数:36
        </PopupTitle>
        {ALERTS.map(([n, t, p, c], i) => (
          <AlertRow key={i}>
            <AlertIcon><DoubleUp /></AlertIcon>
            <AlertName>{n}</AlertName>
            <AlertNum>{t}</AlertNum>
            <AlertNum>{p}</AlertNum>
            <AlertNum>{c}</AlertNum>
          </AlertRow>
        ))}
        <Watermark>
          <WmTop>
            <WmBrand>股海网</WmBrand>
            {"股票软件资源分享".split("").map((ch, i) => <WmChar key={i}>{ch}</WmChar>)}
          </WmTop>
          <WmUrl>Www.Guhai.com.cn</WmUrl>
        </Watermark>
      </Popup>
    </Page>
  );
}
